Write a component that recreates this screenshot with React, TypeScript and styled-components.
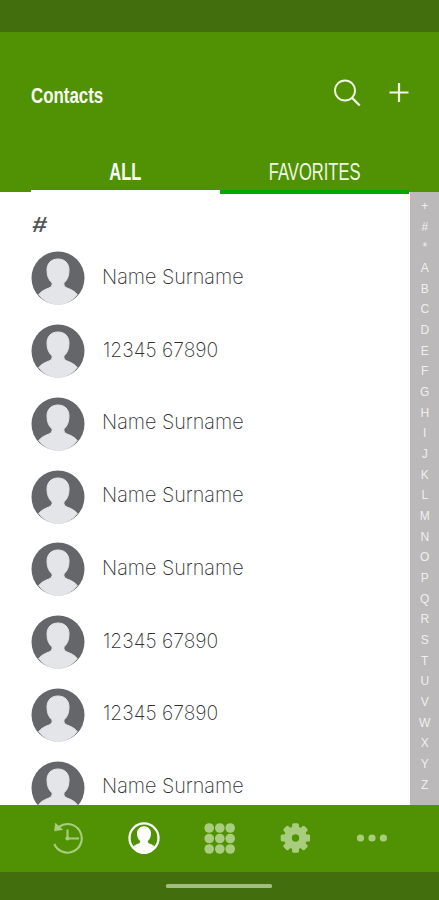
import React from "react";
import styled, { createGlobalStyle } from "styled-components";

const GlobalStyle = createGlobalStyle`
  body { margin: 0; background: #fff; font-family: "Liberation Sans", Arial, sans-serif; }
  * { box-sizing: border-box; }
`;

const Screen = styled.div`
  width: 439px;
  height: 900px;
  display: flex;
  flex-direction: column;
  overflow: hidden;
  background: #fff;
`;

const StatusBar = styled.div`
  height: 32px;
  flex: none;
  background: #436e0d;
`;

const Header = styled.header`
  height: 160px;
  flex: none;
  display: flex;
  flex-direction: column;
  background: #519205;
`;

const TitleBar = styled.div`
  height: 118px;
  padding: 3px 30px 0 31px;
  display: flex;
  align-items: center;
`;

const Title = styled.h1`
  margin: 6px auto 0 0;
  color: #fafcf5;
  font-size: 22.5px;
  line-height: 26px;
  font-weight: 700;
  white-space: nowrap;
  transform: scaleX(0.75);
  transform-origin: left center;
`;

const IconButton = styled.button<{ $gap?: number }>`
  display: flex;
  padding: 0;
  border: 0;
  background: none;
  color: #f2f8e4;
  margin-left: ${(p) => p.$gap ?? 0}px;
`;

const Tabs = styled.div`
  height: 42px;
  padding: 0 30px 0 31px;
  display: flex;
`;

const Tab = styled.div<{ $active?: boolean }>`
  flex: 1;
  height: ${(p) => (p.$active ? 42 : 44)}px;
  display: flex;
  justify-content: center;
  padding-top: 9px;
  color: ${(p) => (p.$active ? "#fff" : "#f0f7e2")};
  font-size: 23px;
  line-height: 26px;
  font-weight: ${(p) => (p.$active ? 700 : 400)};
  border-bottom: ${(p) => (p.$active ? "2px solid #fff" : "4px solid #00a600")};
  position: relative;
  z-index: 1;
`;

const TabLabel = styled.span<{ $scale: number }>`
  display: block;
  flex: none;
  white-space: nowrap;
  transform: scaleX(${(p) => p.$scale});
`;

const Content = styled.main`
  height: 613px;
  flex: none;
  display: flex;
  overflow: hidden;
`;

const List = styled.div`
  flex: 1;
  padding: 20px 0 0 30.5px;
`;

const Section = styled.div`
  height: 30px;
  padding-left: 1px;
  color: #505254;
  font-size: 22px;
  line-height: 26px;
  font-weight: 700;
  transform: scaleX(1.2) skewX(-5deg);
  transform-origin: left center;
`;

const Row = styled.div`
  height: 72.75px;
  display: flex;
  align-items: center;
`;

const Name = styled.span<{ $scale: number; $inset: number }>`
  margin: -3px 0 0 ${(p) => p.$inset}px;
  color: #303133;
  font-family: Inter, "Liberation Sans", sans-serif;
  font-size: 20.5px;
  line-height: 26px;
  font-weight: 250;
  white-space: nowrap;
  transform: scaleX(${(p) => p.$scale});
  transform-origin: left center;
`;

const IndexBar = styled.div`
  width: 29.5px;
  padding: 4px 0 0 1px;
  background: #bbb9ba;
  color: #f0eff0;
  text-align: center;
  font-size: 12px;
`;

const Letter = styled.div`
  height: 20.68px;
  line-height: 20.68px;
`;

const BottomNav = styled.nav`
  height: 67px;
  flex: none;
  padding: 0 30px 1px;
  display: grid;
  grid-template-columns: repeat(5, 1fr);
  align-items: center;
  justify-items: center;
  background: #519205;
`;

const NavItem = styled.div<{ $active?: boolean }>`
  display: flex;
  color: ${(p) => (p.$active ? "#fff" : "#a9cd7e")};
`;

const GestureBar = styled.div`
  height: 28px;
  flex: none;
  display: flex;
  justify-content: center;
  padding: 12px 2px 0 0;
  background: #436e0d;
`;

const Handle = styled.div`
  width: 106px;
  height: 4px;
  border-radius: 1.5px;
  background: #a3bd80;
`;

const PersonPath =
  "M27 8C34 8 38 12.500 38 19C38 25 36.300 29 33 31.800C32.300 34.800 34 36.200 36.500 37.200C40 38.500 43.500 40 46.200 43.500A26.500 26.500 0 0 1 27 53.700A26.500 26.500 0 0 1 7.800 43.500C10.500 40 14 38.500 17.500 37.200C20 36.200 21.700 34.800 21 31.800C17.700 29 16 25 16 19C16 12.500 20 8 27 8Z";

const Avatar = () => (
  <svg width="54" height="54" viewBox="0 0 54 54">
    <circle cx="27" cy="27" r="26.5" fill="#646669" />
    <path d={PersonPath} fill="#e4e5e8" stroke="#e4e5e8" strokeWidth="1" />
  </svg>
);

const SearchIcon = () => (
  <svg width="28" height="28" viewBox="0 0 28 28" fill="none" stroke="currentColor" strokeWidth="1.9">
    <circle cx="12" cy="11.500" r="10" />
    <path d="M19 18.700L26.700 26.500" strokeWidth="2.300" />
  </svg>
);

const PlusIcon = () => (
  <svg width="20" height="20" viewBox="0 0 20 20" stroke="currentColor" strokeWidth="2.200">
    <path d="M10 0v19M.5 9.500h19" />
  </svg>
);

const HistoryIcon = () => (
  <svg width="32" height="32" viewBox="0 0 32 32" fill="none" stroke="currentColor" strokeWidth="2.1">
    <path d="M7 4.800A14.300 14.300 0 1 1 2.300 22" />
    <path d="M15.500 7.500v9H27" />
    <circle cx="15.500" cy="16.500" r="2.100" fill="currentColor" stroke="none" />
    <path d="M3.200 .8L2.200 9.200L11.200 7.800Z" fill="currentColor" stroke="none" />
  </svg>
);

const ContactsIcon = () => (
  <svg width="32" height="32" viewBox="0 0 54 54">
    <circle cx="27" cy="27" r="24.500" fill="none" stroke="currentColor" strokeWidth="3.800" />
    <path d={PersonPath} fill="currentColor" stroke="currentColor" strokeWidth="1.5" />
  </svg>
);

const KeypadIcon = () => (
  <svg width="31" height="31" viewBox="0 0 31 31" fill="currentColor">
    {[5, 15.500, 26].map((y) => [5.200, 15.800, 26.200].map((x) => <circle key={`${x}-${y}`} cx={x} cy={y} r="4.800" />))}
  </svg>
);

const GearIcon = () => (
  <svg width="30" height="30" viewBox="-15.5 -15 30 30">
    <g fill="currentColor">
      {[0, 45, 90, 135].map((a) => (
        <rect key={a} x="-3.4" y="-14.800" width="6.8" height="29.600" rx="1.600" transform={`rotate(${a})`} />
      ))}
    </g>
    <circle r="7.600" fill="none" stroke="currentColor" strokeWidth="7.6" />
    <circle r="3.700" fill="#519205" />
  </svg>
);

const MoreIcon = () => (
  <svg width="31" height="8" viewBox="0 0 31 8" fill="currentColor">
    <circle cx="4.500" cy="4" r="3.600" />
    <circle cx="16" cy="4" r="3.600" />
    <circle cx="27.400" cy="4" r="3.600" />
  </svg>
);

const contacts = [
  "Name Surname",
  "12345 67890",
  "Name Surname",
  "Name Surname",
  "Name Surname",
  "12345 67890",
  "12345 67890",
  "Name Surname",
];

const letters = ["+", "#", "*", ..."ABCDEFGHIJKLMNOPQRSTUVWXYZ"];

export default function App() {
  return (
    <Screen>
      <GlobalStyle />
      <StatusBar />
      <Header>
        <TitleBar>
          <Title>Contacts</Title>
          <IconButton aria-label="Search"><SearchIcon /></IconButton>
          <IconButton aria-label="Add contact" $gap={28}><PlusIcon /></IconButton>
        </TitleBar>
        <Tabs>
          <Tab $active><TabLabel $scale={0.715}>ALL</TabLabel></Tab>
          <Tab><TabLabel $scale={0.72}>FAVORITES</TabLabel></Tab>
        </Tabs>
      </Header>
      <Content>
        <List>
          <Section>#</Section>
          {contacts.map((name, i) => {
            const numeric = /^\d/.test(name);
            return (
              <Row key={i}>
                <Avatar />
                <Name $scale={numeric ? 0.94 : 0.965} $inset={numeric ? 18.5 : 17.5}>{name}</Name>
              </Row>
            );
          })}
        </List>
        <IndexBar>
          {letters.map((l) => <Letter key={l}>{l}</Letter>)}
        </IndexBar>
      </Content>
      <BottomNav>
        <NavItem><HistoryIcon /></NavItem>
        <NavItem $active><ContactsIcon /></NavItem>
        <NavItem><KeypadIcon /></NavItem>
        <NavItem><GearIcon /></NavItem>
        <NavItem><MoreIcon /></NavItem>
      </BottomNav>
      <GestureBar><Handle /></GestureBar>
    </Screen>
  );
}
